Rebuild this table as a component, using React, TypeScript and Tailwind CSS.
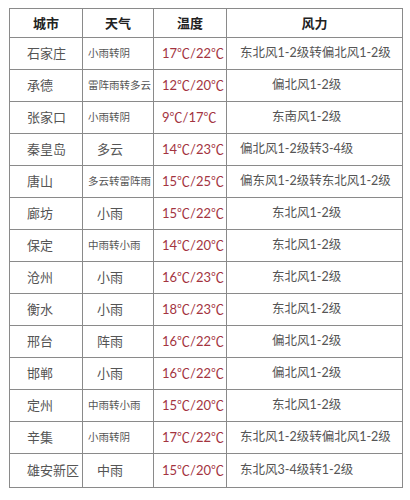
import React from 'react';

type Row = {
  city: string;
  weather: string;
  small: boolean;
  temp: string;
  wind: string;
  long: boolean;
};

const ROWS: Row[] = [
  { city: '石家庄', weather: '小雨转阴', small: true, temp: '17℃/22℃', wind: '东北风1-2级转偏北风1-2级', long: true },
  { city: '承德', weather: '雷阵雨转多云', small: true, temp: '12℃/20℃', wind: '偏北风1-2级', long: false },
  { city: '张家口', weather: '小雨转阴', small: true, temp: '9℃/17℃', wind: '东南风1-2级', long: false },
  { city: '秦皇岛', weather: '多云', small: false, temp: '14℃/23℃', wind: '偏北风1-2级转3-4级', long: true },
  { city: '唐山', weather: '多云转雷阵雨', small: true, temp: '15℃/25℃', wind: '偏东风1-2级转东北风1-2级', long: true },
  { city: '廊坊', weather: '小雨', small: false, temp: '15℃/22℃', wind: '东北风1-2级', long: false },
  { city: '保定', weather: '中雨转小雨', small: true, temp: '14℃/20℃', wind: '东北风1-2级', long: false },
  { city: '沧州', weather: '小雨', small: false, temp: '16℃/23℃', wind: '东北风1-2级', long: false },
  { city: '衡水', weather: '小雨', small: false, temp: '18℃/23℃', wind: '东北风1-2级', long: false },
  { city: '邢台', weather: '阵雨', small: false, temp: '16℃/22℃', wind: '偏北风1-2级', long: false },
  { city: '邯郸', weather: '小雨', small: false, temp: '16℃/22℃', wind: '偏北风1-2级', long: false },
  { city: '定州', weather: '中雨转小雨', small: true, temp: '15℃/20℃', wind: '东北风1-2级', long: false },
  { city: '辛集', weather: '小雨转阴', small: true, temp: '17℃/22℃', wind: '东北风1-2级转偏北风1-2级', long: true },
  { city: '雄安新区', weather: '中雨', small: false, temp: '15℃/20℃', wind: '东北风3-4级转1-2级', long: true },
];

export default function App() {
  return (
    <div className="w-[410px] h-[500px] bg-white pt-[8px] pl-[9px] font-['Lato','Noto_Sans_CJK_SC',sans-serif]">
      <table className="table-fixed border-collapse w-[393px] border border-[#8a8a8a]">
        <colgroup>
          <col className="w-[73px]" />
          <col className="w-[71px]" />
          <col className="w-[73px]" />
          <col className="w-[176px]" />
        </colgroup>
        <thead>
          <tr className="h-[29px] text-[13px] font-bold text-[#222]">
            <th className="border border-[#8a8a8a] text-center font-['Noto_Sans_CJK_SC',serif]">城市</th>
            <th className="border border-[#8a8a8a] text-center font-['Noto_Sans_CJK_SC',serif]">天气</th>
            <th className="border border-[#8a8a8a] text-center font-['Noto_Sans_CJK_SC',serif]">温度</th>
            <th className="border border-[#8a8a8a] text-center font-['Noto_Sans_CJK_SC',serif]">风力</th>
          </tr>
        </thead>
        <tbody>
          {ROWS.map((r, i) => (
            <tr key={r.city} className={i === ROWS.length - 1 ? 'h-[34px]' : 'h-[32px]'}>
              <td className="border border-[#8a8a8a] pl-[17px] text-[13px] text-[#555] whitespace-nowrap">{r.city}</td>
              <td
                className={
                  r.small
                    ? 'border border-[#8a8a8a] pl-[5px] text-[10.5px] text-[#555] whitespace-nowrap'
                    : 'border border-[#8a8a8a] pl-[14px] text-[13px] text-[#555] whitespace-nowrap'
                }
              >
                {r.weather}
              </td>
              <td className="border border-[#8a8a8a] pl-[8px] text-[13px] text-[#a3343f] whitespace-nowrap">{r.temp}</td>
              <td
                className={
                  r.long
                    ? 'border border-[#8a8a8a] pl-[13px] text-[12.5px] text-[#555] whitespace-nowrap'
                    : 'border border-[#8a8a8a] pl-[45px] text-[12.5px] text-[#555] whitespace-nowrap'
                }
              >
                {r.wind}
              </td>
            </tr>
          ))}
        </tbody>
      </table>
    </div>
  );
}
